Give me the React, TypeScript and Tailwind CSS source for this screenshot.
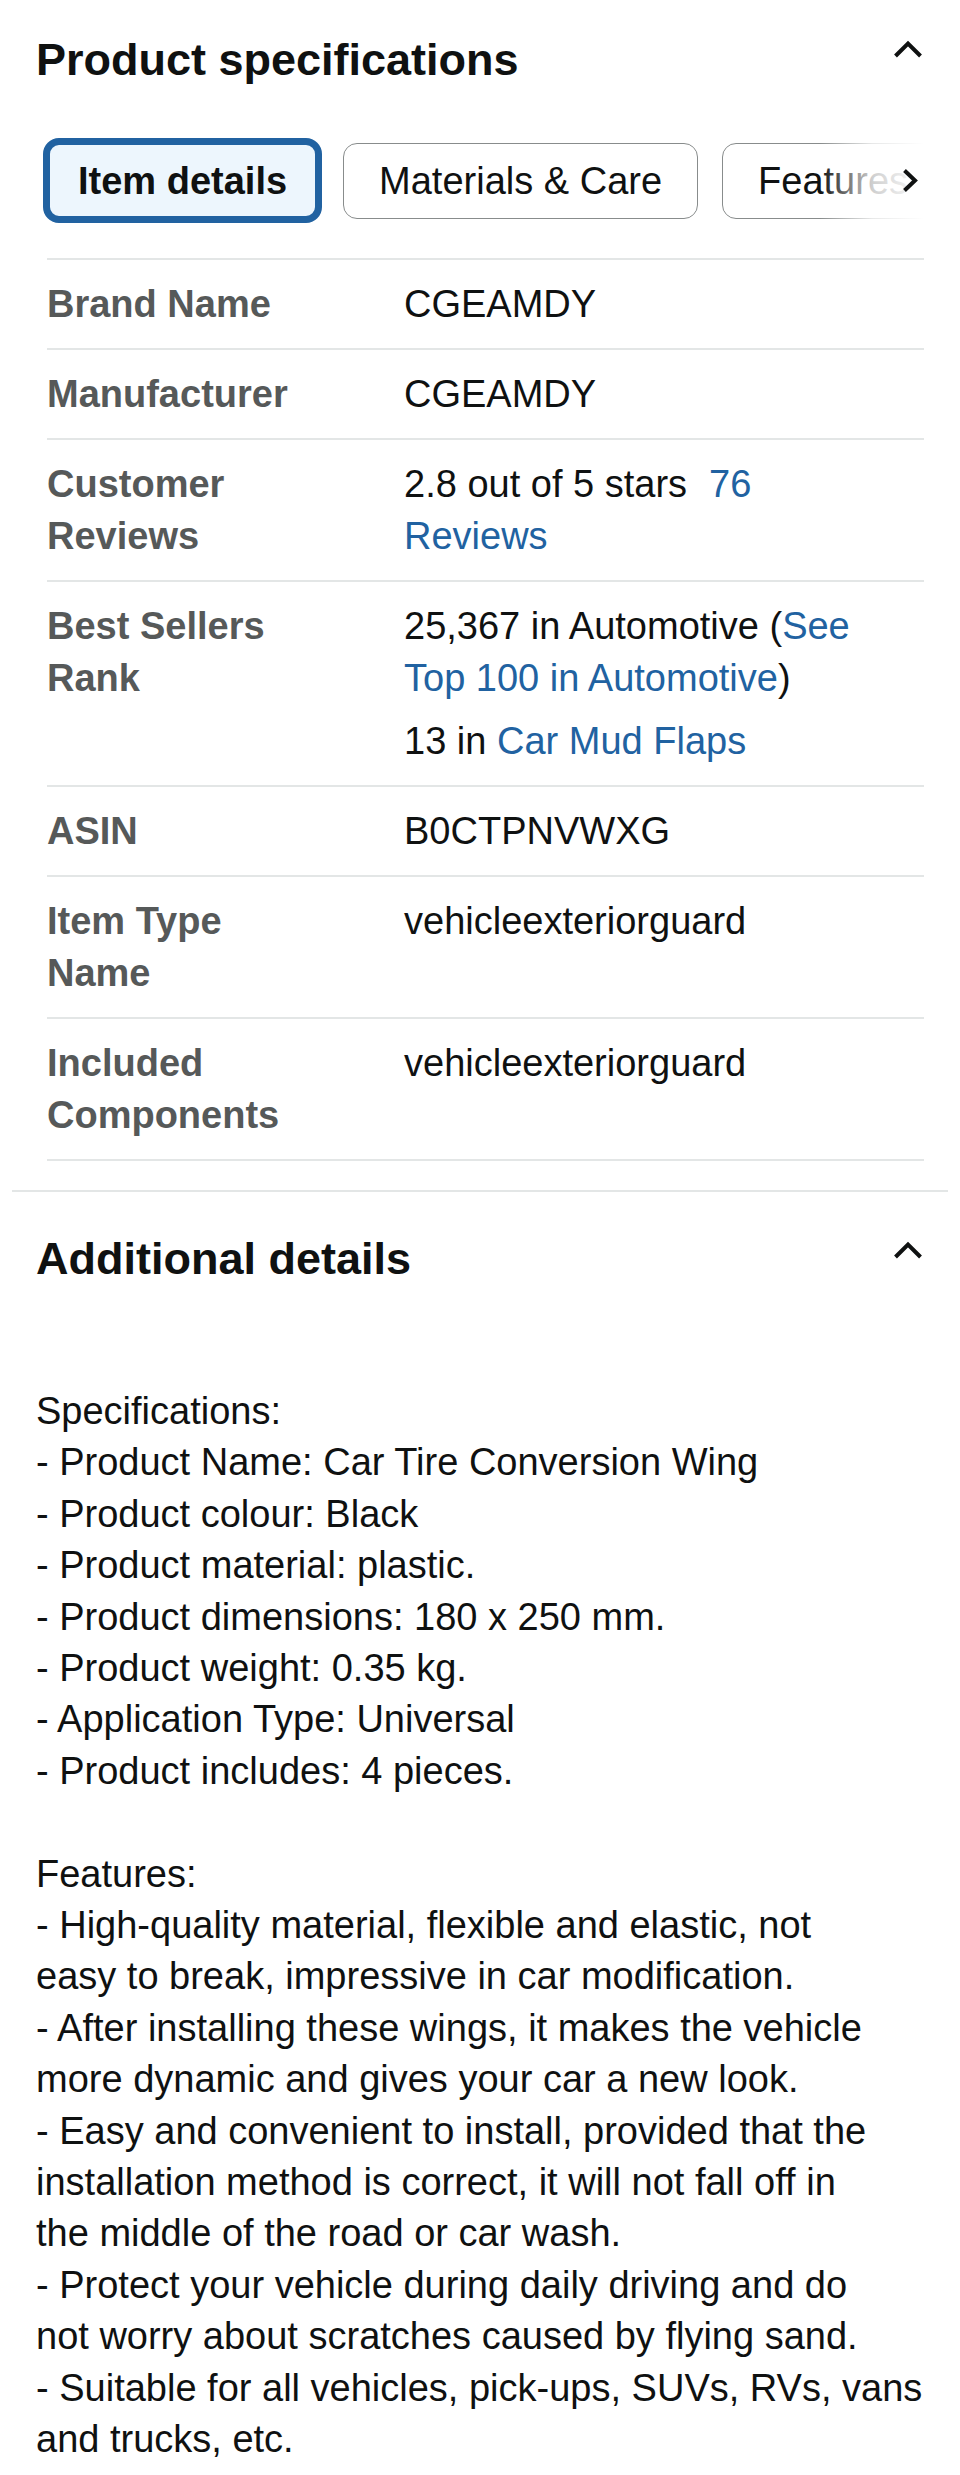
import type { ReactNode } from 'react'

const Chevron = ({ className = '' }: { className?: string }) => (
  <svg className={className} width="30" height="18" viewBox="0 0 30 18" fill="none">
    <polyline points="2.5,16 15,3.5 27.5,16" stroke="#0f1111" strokeWidth="4" />
  </svg>
)

const Link = ({ children }: { children: ReactNode }) => (
  <a href="#" className="text-[#2162a1]">
    {children}
  </a>
)

const rows: { label: string; value: ReactNode }[] = [
  { label: 'Brand Name', value: 'CGEAMDY' },
  { label: 'Manufacturer', value: 'CGEAMDY' },
  {
    label: 'Customer Reviews',
    value: (
      <>
        <span>2.8 out of 5 stars</span>
        <span className="ml-[22px]">
          <Link>76</Link>
        </span>{' '}
        <Link>Reviews</Link>
      </>
    ),
  },
  {
    label: 'Best Sellers Rank',
    value: (
      <div>
        <div>
          25,367 in Automotive (<Link>See</Link> <Link>Top 100 in Automotive</Link>)
        </div>
        <div className="mt-[11px]">
          13 in <Link>Car Mud Flaps</Link>
        </div>
      </div>
    ),
  },
  { label: 'ASIN', value: 'B0CTPNVWXG' },
  { label: 'Item Type Name', value: 'vehicleexteriorguard' },
  { label: 'Included Components', value: 'vehicleexteriorguard' },
]

const specs = [
  'Specifications:',
  '- Product Name: Car Tire Conversion Wing',
  '- Product colour: Black',
  '- Product material: plastic.',
  '- Product dimensions: 180 x 250 mm.',
  '- Product weight: 0.35 kg.',
  '- Application Type: Universal',
  '- Product includes: 4 pieces.',
]

// wrapped the same way the listing wraps them
const features = [
  ['Features:'],
  ['- High-quality material, flexible and elastic, not', 'easy to break, impressive in car modification.'],
  ['- After installing these wings, it makes the vehicle', 'more dynamic and gives your car a new look.'],
  [
    '- Easy and convenient to install, provided that the',
    'installation method is correct, it will not fall off in',
    'the middle of the road or car wash.',
  ],
  ['- Protect your vehicle during daily driving and do', 'not worry about scratches caused by flying sand.'],
  ['- Suitable for all vehicles, pick-ups, SUVs, RVs, vans', 'and trucks, etc.'],
]

export default function App() {
  return (
    <div className="min-h-[2475px] w-[960px] bg-white font-['Liberation_Sans',Arial,sans-serif] text-[#0f1111]">
      {/* Product specifications */}
      <section className="px-[36px]">
        <div className="flex h-[120px] items-center justify-between">
          <h2 className="text-[45px] font-bold leading-[56px]">Product specifications</h2>
          <Chevron className="mb-[22px] mr-[1px]" />
        </div>

        {/* Tabs */}
        <div className="relative ml-[7px] mt-[18px] flex h-[85px] items-center overflow-hidden whitespace-nowrap text-[38px] leading-[44px]">
          <button className="flex h-[85px] shrink-0 items-center rounded-[16px] border-[7px] border-[#2162a1] bg-[#edf6fd] px-[28px] font-bold">
            Item details
          </button>
          <button className="ml-[21px] flex h-[76px] shrink-0 items-center rounded-[14px] border-[1.5px] border-[#888c8c] bg-white px-[35px]">
            Materials &amp; Care
          </button>
          <button className="ml-[24px] flex h-[76px] shrink-0 items-center rounded-[14px] border-[1.5px] border-[#888c8c] bg-white px-[35px]">
            Features
          </button>
          <div className="absolute right-0 top-0 h-full w-[104px] bg-gradient-to-r from-white/0 via-white/80 to-white" />
          <svg className="absolute right-[6px] top-[30px]" width="16" height="25" viewBox="0 0 16 25" fill="none">
            <polyline points="2.5,2.5 13,12.5 2.5,22.5" stroke="#0f1111" strokeWidth="4" />
          </svg>
        </div>

        {/* Table */}
        <div className="ml-[11px] mt-[35px] border-t-2 border-[#e3e6e6] text-[38px] leading-[52px]">
          {rows.map((row) => (
            <div key={row.label} className="flex border-b-2 border-[#e3e6e6] py-[18px]">
              <div className="w-[357px] shrink-0 pr-[76px] font-bold text-[#565959]">{row.label}</div>
              <div className="min-w-0 flex-1 pr-[20px]">{row.value}</div>
            </div>
          ))}
        </div>
      </section>

      {/* Additional details */}
      <div className="mx-[12px] mt-[29px] h-[2px] bg-[#e3e6e6]" />
      <section className="px-[36px]">
        <div className="flex h-[134px] items-center justify-between">
          <h2 className="text-[45px] font-bold leading-[56px]">Additional details</h2>
          <Chevron className="mb-[18px] mr-[1px]" />
        </div>
        <div className="pt-[60px] text-[38px] leading-[51.4px]">
          {specs.map((line) => (
            <p key={line}>{line}</p>
          ))}
          <p className="h-[51.4px]" />
          {features.map((item) => (
            <p key={item[0]}>
              {item.map((line) => (
                <span key={line} className="block">
                  {line}
                </span>
              ))}
            </p>
          ))}
        </div>
      </section>
    </div>
  )
}
